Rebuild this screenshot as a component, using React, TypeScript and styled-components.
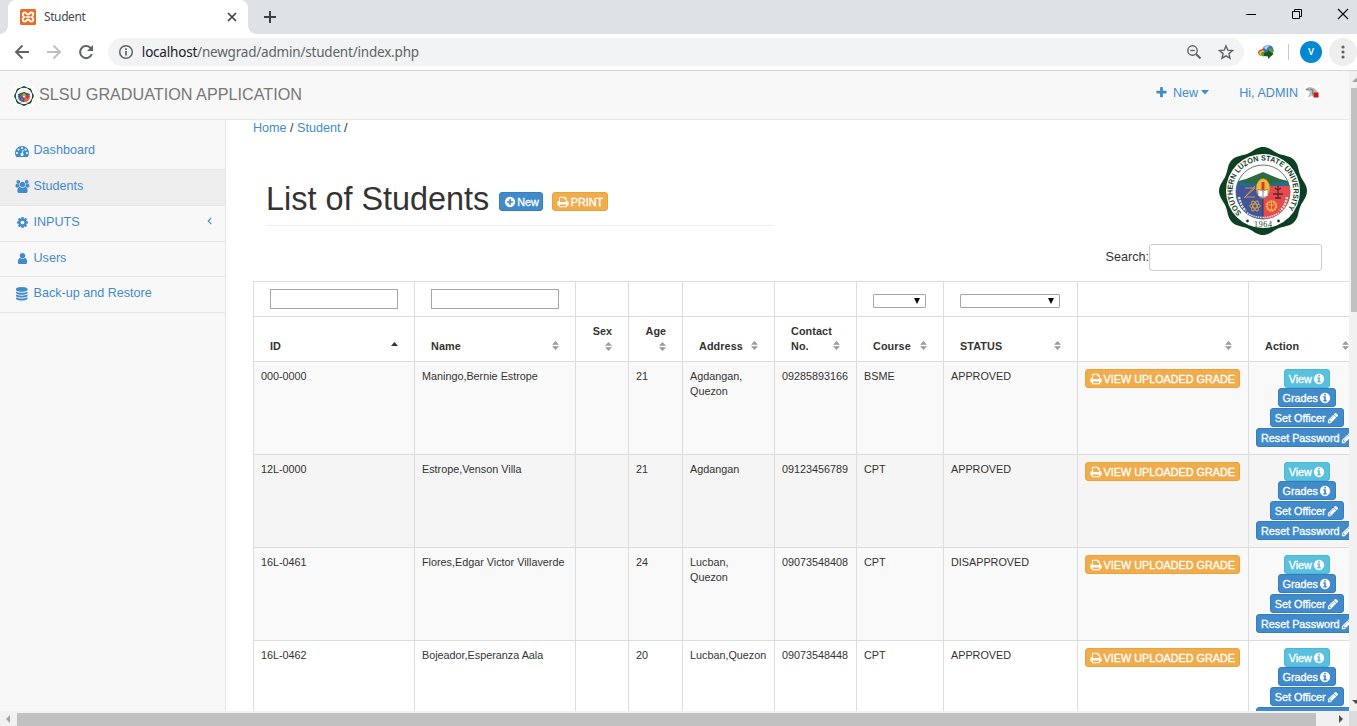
import React from 'react';
import styled, { createGlobalStyle } from 'styled-components';

const Global = createGlobalStyle`
  *, *::before, *::after { box-sizing: border-box; }
  html, body { margin: 0; padding: 0; overflow: hidden; }
  body { font-family: "Liberation Sans", Arial, sans-serif; font-size: 12.6px; line-height: 18px; color: #333; background: #fff; }
`;

/* ---------- icons ---------- */

const disc =
  'q0 209-103 385.5t-279.5 279.5-385.5 103-385.5-103-279.5-279.5-103-385.5 103-385.5 279.5-279.5 385.5-103 385.5 103 279.5 279.5 103 385.5z';

const glyphs = {
  plus: 'M1600 736v192q0 40-28 68t-68 28h-416v416q0 40-28 68t-68 28h-192q-40 0-68-28t-28-68v-416h-416q-40 0-68-28t-28-68v-192q0-40 28-68t68-28h416v-416q0-40 28-68t68-28h192q40 0 68 28t28 68v416h416q40 0 68 28t28 68z',
  plusCircle:
    'M1344 960v-128q0-26-19-45t-45-19h-256v-256q0-26-19-45t-45-19h-128q-26 0-45 19t-19 45v256h-256q-26 0-45 19t-19 45v128q0 26 19 45t45 19h256v256q0 26 19 45t45 19h128q26 0 45-19t19-45v-256h256q26 0 45-19t19-45zm320-64' + disc,
  infoCircle:
    'M1152 1376v-160q0-14-9-23t-23-9h-96v-512q0-14-9-23t-23-9h-320q-14 0-23 9t-9 23v160q0 14 9 23t23 9h96v320h-96q-14 0-23 9t-9 23v160q0 14 9 23t23 9h448q14 0 23-9t9-23zm-128-896v-160q0-14-9-23t-23-9h-192q-14 0-23 9t-9 23v160q0 14 9 23t23 9h192q14 0 23-9t9-23zm640 416' + disc,
  print:
    'M448 1536h896v-256h-896v256zm0-640h896v-384h-160q-40 0-68-28t-28-68v-160h-640v640zm1152 64q0-26-19-45t-45-19-45 19-19 45 19 45 45 19 45-19 19-45zm128 0v416q0 13-9.5 22.5t-22.5 9.5h-224v160q0 40-28 68t-68 28h-960q-40 0-68-28t-28-68v-160h-224q-13 0-22.5-9.5t-9.5-22.5v-416q0-79 56.5-135.5t135.5-56.5h64v-544q0-40 28-68t68-28h672q40 0 88 20t76 48l152 152q28 28 48 76t20 88v256h64q79 0 135.5 56.5t56.5 135.5z',
  pencil:
    'M491 1536l91-91-235-235-91 91v107h128v128h107zm523-928q0-22-22-22-10 0-17 7l-542 542q-7 7-7 17 0 22 22 22 10 0 17-7l542-542q7-7 7-17zm-54-192l416 416-832 832h-416v-416zm683 96q0 53-37 90l-166 166-416-416 166-165q36-38 90-38 53 0 91 38l235 234q37 39 37 91z',
  cog: 'M1152 896q0-106-75-181t-181-75-181 75-75 181 75 181 181 75 181-75 75-181zm512-109v222q0 12-8 23t-20 13l-185 28q-19 54-39 91 35 50 107 138 10 12 10 25t-9 23q-27 37-99 108t-94 71q-12 0-26-9l-138-108q-44 23-91 38-16 136-29 186-7 28-36 28h-222q-14 0-24.5-8.5t-11.5-21.5l-28-184q-49-16-90-37l-141 107q-10 9-25 9-14 0-25-11-126-114-165-168-7-10-7-23 0-12 8-23 15-21 51-66.5t54-70.5q-27-50-41-99l-183-27q-13-2-21-12.5t-8-23.5v-222q0-12 8-23t19-13l186-28q14-46 39-92-40-57-107-138-10-12-10-24 0-10 9-23 26-36 98.5-107.5t94.5-71.5q13 0 26 10l138 107q44-23 91-38 16-136 29-186 7-28 36-28h222q14 0 24.5 8.5t11.5 21.5l28 184q49 16 90 37l142-107q9-9 24-9 13 0 25 10 129 119 165 170 7 8 7 22 0 12-8 23-15 21-51 66.5t-54 70.5q26 50 41 98l183 28q13 2 21 12.5t8 23.5z',
  user: 'M1536 1399q0 109-62.5 187t-150.5 78h-854q-88 0-150.5-78t-62.5-187q0-85 8.5-160.5t31.5-152 58.5-131 94-89 134.5-34.5q131 128 313 128t313-128q76 0 134.5 34.5t94 89 58.5 131 31.5 152 8.5 160.5zm-256-887q0 159-112.5 271.5t-271.5 112.5-271.5-112.5-112.5-271.5 112.5-271.5 271.5-112.5 271.5 112.5 112.5 271.5z',
  database:
    'M896 768q237 0 443-43t325-127v170q0 69-103 128t-280 93.5-385 34.5-385-34.5-280-93.5-103-128v-170q119 84 325 127t443 43zm0 768q237 0 443-43t325-127v170q0 69-103 128t-280 93.5-385 34.5-385-34.5-280-93.5-103-128v-170q119 84 325 127t443 43zm0-384q237 0 443-43t325-127v170q0 69-103 128t-280 93.5-385 34.5-385-34.5-280-93.5-103-128v-170q119 84 325 127t443 43zm0-1152q208 0 385 34.5t280 93.5 103 128v128q0 69-103 128t-280 93.5-385 34.5-385-34.5-280-93.5-103-128v-128q0-69 103-128t280-93.5 385-34.5z',
  users:
    'M529 896q-162 5-265 128h-134q-82 0-138-40.5t-56-118.5q0-353 124-353 6 0 43.5 21t97.5 42.5 119 21.5q67 0 133-23-5 37-5 66 0 139 81 256zm1071 637q0 120-73 189.5t-194 69.5h-874q-121 0-194-69.5t-73-189.5q0-53 3.5-103.5t14-109 26.5-108.5 43-97.5 62-81 85.5-53.5 111.5-20q10 0 43 21.5t73 48 107 48 135 21.5 135-21.5 107-48 73-48 43-21.5q61 0 111.5 20t85.5 53.5 62 81 43 97.5 26.5 108.5 14 109 3.5 103.5zm-1024-1277q0 106-75 181t-181 75-181-75-75-181 75-181 181-75 181 75 75 181zm704 384q0 159-112.5 271.5t-271.5 112.5-271.5-112.5-112.5-271.5 112.5-271.5 271.5-112.5 271.5 112.5 112.5 271.5zm576 225q0 78-56 118.5t-138 40.5h-134q-103-123-265-128 81-117 81-256 0-29-5-66 66 23 133 23 59 0 119-21.5t97.5-42.5 43.5-21q124 0 124 353zm-128-609q0 106-75 181t-181 75-181-75-75-181 75-181 181-75 181 75 75 181z',
  gauge:
    'M384 1152q0-53-37.5-90.5t-90.5-37.5-90.5 37.5-37.5 90.5 37.5 90.5 90.5 37.5 90.5-37.5 37.5-90.5zm192-448q0-53-37.5-90.5t-90.5-37.5-90.5 37.5-37.5 90.5 37.5 90.5 90.5 37.5 90.5-37.5 37.5-90.5zm428 481l101-382q6-26-7.5-48.5t-38.5-29.5-48 6.5-30 39.5l-101 382q-60 5-107 43.5t-63 98.5q-20 77 20 146t117 89 146-20 89-117q16-60-6-117t-72-91zm660-33q0-53-37.5-90.5t-90.5-37.5-90.5 37.5-37.5 90.5 37.5 90.5 90.5 37.5 90.5-37.5 37.5-90.5zm-640-640q0-53-37.5-90.5t-90.5-37.5-90.5 37.5-37.5 90.5 37.5 90.5 90.5 37.5 90.5-37.5 37.5-90.5zm448 192q0-53-37.5-90.5t-90.5-37.5-90.5 37.5-37.5 90.5 37.5 90.5 90.5 37.5 90.5-37.5 37.5-90.5zm320 448q0 261-141 483-19 29-54 29h-1402q-35 0-54-29-141-221-141-483 0-182 71-348t191-286 286-191 348-71 348 71 286 191 191 286 71 348z',
};
type GlyphName = keyof typeof glyphs;

const Svg = styled.svg<{ $s: number }>`
  width: ${p => p.$s}px;
  height: ${p => p.$s}px;
  flex: none;
  display: block;
  overflow: visible;
`;
const Glyph = ({ name, size = 12.6 }: { name: GlyphName; size?: number }) => (
  <Svg $s={size} viewBox="0 0 1792 1792" fill="currentColor">
    <path d={glyphs[name]} />
  </Svg>
);

/* ---------- browser frame ---------- */

const Window = styled.div`
  width: 1357px;
  height: 726px;
  display: flex;
  flex-direction: column;
  overflow: hidden;
`;
const TabStrip = styled.div`
  height: 34px;
  flex: none;
  background: #dee1e6;
  display: flex;
  justify-content: space-between;
  padding-left: 8px;
`;
const TabGroup = styled.div`
  display: flex;
  align-items: center;
`;
const Tab = styled.div`
  position: relative;
  width: 240px;
  height: 34px;
  background: #fff;
  border-radius: 8px 8px 0 0;
  display: flex;
  align-items: center;
  padding: 0 10px 0 12px;
  font: 12px/16px "Noto Sans", "Open Sans", sans-serif;
  color: #45494d;
  &::before, &::after {
    content: '';
    position: absolute;
    bottom: 0;
    width: 8px;
    height: 8px;
  }
  &::before { left: -8px; background: radial-gradient(circle at 0 0, transparent 7.5px, #fff 8px); }
  &::after { right: -8px; background: radial-gradient(circle at 100% 0, transparent 7.5px, #fff 8px); }
`;
const TabTitle = styled.span`
  flex: 1;
  padding-left: 8px;
  letter-spacing: -0.4px;
`;
const NewTab = styled.div`
  padding-left: 15px;
`;
const WinButtons = styled.div`
  display: flex;
  height: 28px;
  align-items: center;
  gap: 34px;
  padding-right: 8px;
`;
const Toolbar = styled.div`
  height: 37px;
  flex: none;
  background: #fff;
  border-bottom: 1px solid #d5d6d8;
  display: flex;
  align-items: center;
  padding-left: 14px;
`;
const NavButtons = styled.div`
  display: flex;
  gap: 16px;
  width: 94px;
`;
const UrlBar = styled.div`
  width: 1138px;
  height: 28px;
  border-radius: 14px;
  background: #f1f3f4;
  display: flex;
  align-items: center;
  padding: 0 10px 0 10px;
  font: 13.5px/20px "Noto Sans", "Open Sans", sans-serif;
  color: #5f6368;
`;
const Url = styled.span`
  flex: 1;
  padding-left: 8px;
  letter-spacing: -0.2px;
  b { font-weight: 400; color: #202124; }
`;
const UrlIcons = styled.div`
  display: flex;
  gap: 16px;
`;
const Extension = styled.div`
  padding-left: 14px;
  width: 44px;
`;
const Divider = styled.div`
  width: 1px;
  height: 16px;
  background: #c8cace;
`;
const Avatar = styled.div`
  width: 22px;
  height: 22px;
  margin-left: 11px;
  border-radius: 50%;
  background: #0288d1;
  color: #fff;
  font: 500 9.5px/22px Roboto, sans-serif;
  text-align: center;
`;
const Kebab = styled.div`
  width: 28px;
  height: 28px;
  margin-left: 7px;
  flex: none;
  border-radius: 50%;
  background: #eeeeee;
  display: flex;
  align-items: center;
  justify-content: center;
`;
const Viewport = styled.div`
  flex: 1;
  min-height: 0;
  display: flex;
`;
const Page = styled.div`
  width: 1349px;
  height: 640px;
  overflow: hidden;
  display: flex;
  flex-direction: column;
`;
const VTrack = styled.div`
  width: 8px;
  background: #f1f1f1;
  display: flex;
  flex-direction: column;
  justify-content: space-between;
  padding: 7px 0 7px 2px;
`;
const VThumb = styled.div`
  height: 224px;
  margin: 6px 0 auto;
  background: #c1c1c1;
`;
const HTrack = styled.div`
  height: 15px;
  flex: none;
  background: #f1f1f1;
  display: flex;
  align-items: center;
  padding-left: 6px;
`;
const HThumb = styled.div`
  width: 1299px;
  height: 13px;
  margin: 2px 23px 0 7px;
  background: #c1c1c1;
`;
const Corner = styled.div`
  width: 8px;
  height: 15px;
  margin-left: auto;
  background: #dcdcdc;
`;

/* ---------- app layout ---------- */

const Navbar = styled.div`
  height: 49px;
  flex: none;
  background: #f8f8f8;
  border-bottom: 1px solid #e7e7e7;
  display: flex;
  justify-content: space-between;
  padding: 0 29px 0 14px;
`;
const Brand = styled.div`
  display: flex;
  align-items: center;
  gap: 5px;
  height: 46px;
  font-size: 16.2px;
  color: #777;
  white-space: nowrap;
`;
const BrandSeal = styled.div`
  width: 20px;
  height: 20px;
  margin-top: 4px;
  background: #fff;
`;
const TopLinks = styled.div`
  display: flex;
  align-items: center;
  height: 43px;
  color: #428bca;
`;
const TopLink = styled.div<{ $ml?: number }>`
  display: flex;
  align-items: center;
  margin-left: ${p => p.$ml ?? 0}px;
`;
const NewText = styled.span`
  padding: 0 3px 0 5px;
`;
const UserPic = styled.div`
  margin: 3px 0 0 6px;
`;
const Body = styled.div`
  flex: 1;
  min-height: 0;
  display: flex;
`;
const Sidebar = styled.div`
  width: 226px;
  flex: none;
  background: #f8f8f8;
  border-right: 1px solid #e7e7e7;
  padding-top: 14px;
`;
const SideItem = styled.div<{ $active?: boolean; $h: number }>`
  height: ${p => p.$h}px;
  border-bottom: 1px solid #e7e7e7;
  background: ${p => (p.$active ? '#eee' : 'transparent')};
  color: #428bca;
  display: flex;
  align-items: flex-start;
  padding: 7px 13px 0 15px;
`;
const SideIcon = styled.span`
  width: 14px;
  height: 18px;
  margin-right: 4.5px;
  padding-top: 3px;
  display: flex;
  justify-content: center;
`;
const SideArrow = styled.span`
  margin: -1px 0 0 auto;
`;
const Main = styled.div`
  flex: 1;
  min-width: 0;
  padding-left: 27px;
`;
const Crumbs = styled.div`
  height: 26px;
  line-height: 17px;
  a { color: #428bca; }
`;
const Hero = styled.div`
  height: 94px;
  display: flex;
  justify-content: space-between;
  padding: 0 41px 0 13px;
`;
const Heading = styled.div`
  width: 508px;
  height: 80px;
  border-bottom: 1px solid #eee;
  display: flex;
  align-items: flex-start;
  padding-top: 33px;
`;
const Title = styled.h1`
  margin: 0 10px 0 0;
  font-weight: 400;
  font-size: 32.4px;
  line-height: 40px;
  white-space: nowrap;
`;
const SearchRow = styled.div`
  display: flex;
  justify-content: flex-end;
  height: 41px;
  padding: 4px 27px 0 0;
  line-height: 26px;
`;
const SearchInput = styled.input`
  width: 173px;
  height: 27px;
  border: 1px solid #ccc;
  border-radius: 3px;
  outline: 0;
  background: #fff;
`;

const tones = {
  primary: ['#428bca', '#357ebd'],
  warning: ['#f0ad4e', '#eea236'],
  info: ['#5bc0de', '#46b8da'],
};
const Button = styled.span<{ $tone: keyof typeof tones; $w: number }>`
  width: ${p => p.$w}px;
  height: 19px;
  flex: none;
  border: 1px solid ${p => tones[p.$tone][1]};
  border-radius: 3px;
  background: ${p => tones[p.$tone][0]};
  color: #fff;
  font-size: 10.8px;
  line-height: 16px;
  padding-top: 1px;
  -webkit-text-stroke: 0.3px #fff;
  display: flex;
  align-items: center;
  justify-content: center;
  gap: 1.5px;
  white-space: nowrap;
  svg { stroke: none; -webkit-text-stroke: 0; }
`;
const HeadButtons = styled.div`
  display: flex;
  gap: 9px;
  padding-top: 13px;
`;

/* ---------- table ---------- */

const Table = styled.div`
  width: 1105px;
  font-size: 10.8px;
  line-height: 15px;
`;
const Row = styled.div<{ $h: number; $bg?: string }>`
  display: grid;
  grid-template-columns: 161px 161px 53px 54px 92px 82px 87px 134px 171px 110px;
  height: ${p => p.$h}px;
  background: ${p => p.$bg ?? '#fff'};
`;
const Cell = styled.div`
  border-top: 1px solid #ddd;
  border-left: 1px solid #ddd;
  padding: 7px 7px 0;
`;
const FilterCell = styled(Cell)`
  padding: 7px 16px 0;
`;
const HeadCell = styled(Cell)`
  display: flex;
  align-items: flex-end;
  justify-content: space-between;
  padding: 0 15px 7px 16px;
  font-weight: 700;
  letter-spacing: 0.1px;
`;
const NarrowHead = styled(Cell)`
  display: flex;
  flex-direction: column;
  align-items: flex-end;
  padding: 7px 16px 0 0;
  font-weight: 700;
`;
const FilterInput = styled.input`
  width: 128px;
  height: 20px;
  display: block;
  border: 1px solid #a6a6a6;
  outline: 0;
  background: #fff;
`;
const FilterSelect = styled.div<{ $w: number }>`
  width: ${p => p.$w}px;
  height: 14px;
  margin-top: 5px;
  border: 1px solid #a6a6a6;
  border-radius: 1px;
  display: flex;
  align-items: center;
  justify-content: flex-end;
  padding-right: 5px;
`;
const Actions = styled.div`
  width: 102px;
  display: flex;
  flex-direction: column;
  align-items: center;
  gap: 1px;
  & > :first-child { margin-bottom: -1px; }
`;

const SortIcon = ({ asc }: { asc?: boolean }) => (
  <Svg $s={9} viewBox="0 0 9 9">
    {asc ? (
      <path d="M4.5 0 8 4H1z" fill="#333" />
    ) : (
      <path d="M4.5 0 8 3.8H1zM1 5.200h7L4.500 9z" fill="#999" />
    )}
  </Svg>
);
const SortWrap = styled.span<{ $up?: boolean; $shift?: number }>`
  padding-bottom: ${p => (p.$up ? 3 : 4)}px;
  margin-right: ${p => p.$shift ?? 0}px;
`;
const NarrowSort = styled.span`
  padding-top: 3px;
  margin-right: -1px;
`;
const DropArrow = () => (
  <svg width="6" height="6" viewBox="0 0 6 6"><path d="M0 0h6L3 6z" fill="#000" /></svg>
);

/* ---------- pictures ---------- */

const scallop = (() => {
  let d = '';
  for (let i = 0; i <= 160; i++) {
    const a = (i / 160) * Math.PI * 2;
    const r = 42.2 + 1.8 * Math.cos(8 * a);
    d += `${i ? 'L' : 'M'}${(45 + r * Math.sin(a)).toFixed(2)} ${(45 - r * Math.cos(a)).toFixed(2)}`;
  }
  return d + 'z';
})();

const Seal = ({ size, id }: { size: number; id: string }) => (
  <Svg $s={size} viewBox="0 0 90 90">
    <defs>
      <path id={`${id}-ring`} d="M24.500 67.500A30.400 30.400 0 1 1 65.500 67.500" />
      <clipPath id={`${id}-clip`}><circle cx="45" cy="46" r="27" /></clipPath>
    </defs>
    <path d={scallop} fill="#0d4023" />
    <circle cx="45" cy="45" r="37" fill="#fff" />
    <circle cx="45" cy="46" r="27" fill="#fff" stroke="#3d594b" strokeWidth=".8" />
    <g clipPath={`url(#${id}-clip)`}>
      <path d="M17 36 28 33 45 26 62 33 74 36V41H17z" fill="#2b6a43" />
      <path d="M17 36.500h10l10 1.500h16l10-2h12v4H17z" fill="#246b94" />
      <path d="M17 40h28v35H17z" fill="#42549a" />
      <path d="M45 40h28v35H45z" fill="#e64a4f" />
      <path d="M45 38v35" stroke="#222d53" strokeWidth=".8" />
      <g stroke="#d9a441" fill="none" strokeWidth=".9">
        <path d="M27 42h10L27 51h10M26 52l11-12" />
        <ellipse cx="37" cy="60" rx="5.500" ry="2" />
        <ellipse cx="37" cy="60" rx="5.500" ry="2" transform="rotate(60 37 60)" />
        <ellipse cx="37" cy="60" rx="5.500" ry="2" transform="rotate(120 37 60)" />
      </g>
      <circle cx="53.500" cy="60" r="4.600" fill="none" stroke="#f2b63c" strokeWidth="2.200" strokeDasharray="2 .5" />
      <path d="M53.500 56v8M51 59h5" stroke="#f2b63c" strokeWidth="1" />
      <path d="M60 40v13M55 48h10M57 52h6M57 42l3 2 3-2" stroke="#5a2626" strokeWidth="1.300" fill="none" />
      <path d="M21 51q2 10 7 14M69 51q-2 10-7 14" stroke="#d5dfd0" strokeWidth="2.500" strokeDasharray="2 1" fill="none" />
      <path d="M29 67q16 9 32 0" stroke="#dfe2f2" strokeWidth="1.500" strokeDasharray="1.500 .8" fill="none" />
    </g>
    <ellipse cx="45" cy="42.500" rx="7" ry="10" fill="#efbb35" stroke="#a06a20" strokeWidth=".5" />
    <path d="M43.500 36h3v8h-3z" fill="#d63c31" />
    <path d="M40 43.500 45 45l5-1.500V50L45 51.500 40 50z" fill="#fff" stroke="#465089" strokeWidth=".5" />
    <path d="M45 45v6" stroke="#465089" strokeWidth=".7" />
    <circle cx="29.500" cy="75" r="1.400" fill="#173d26" />
    <circle cx="60.500" cy="75" r="1.400" fill="#173d26" />
    {size > 40 && (
      <g fill="#153c26" fontWeight="700">
        <text fontSize="7.600" fontFamily='"Liberation Sans", sans-serif'>
          <textPath href={`#${id}-ring`} textLength="138" lengthAdjust="spacingAndGlyphs" startOffset="1">SOUTHERN LUZON STATE UNIVERSITY</textPath>
        </text>
        <text x="45" y="81" fontSize="8" textAnchor="middle" fontFamily='"Liberation Serif", serif' fontWeight="400" textLength="18">1964</text>
      </g>
    )}
  </Svg>
);

const Favicon = () => (
  <Svg $s={16} viewBox="0 0 16 16">
    <rect width="16" height="16" rx="1.500" fill="#ec6b1f" />
    <path d="M4.700 3.500c2 0 1.800 2 3.300 2s1.300-2 3.300-2c1.300 0 2 .9 2 2.200 0 1.600-1.500 1.500-1.500 2.300s1.500.8 1.500 2.300c0 1.300-.7 2.200-2 2.200-2 0-1.800-2-3.300-2s-1.300 2-3.300 2c-1.300 0-2-.9-2-2.200C2.700 8.800 4.200 8.800 4.200 8S2.700 7.300 2.700 5.700c0-1.300.7-2.200 2-2.200z" fill="none" stroke="#fff" strokeWidth="1.800" />
    <path d="M5.500 8h5" stroke="#fff" strokeWidth="1.500" />
  </Svg>
);

const GlobeExtension = () => (
  <Svg $s={16} viewBox="0 0 16 16">
    <circle cx="10" cy="6.500" r="5.600" fill="#3470c4" />
    <path d="M6 3.500Q9 0 12 2 9 3 9 5.500 7 6 6 3.500z" fill="#b4d6f3" />
    <path d="M11 4q3 0 4.500 3-.5 3-3 4-2-3-1.500-7z" fill="#59a534" />
    <path d="M0 8Q2 4.500 5.500 5L6 9l-3 3Q0 11 0 8z" fill="#e0402e" />
    <path d="M1.500 8.500Q3 6 5.500 6.500L8 11l-4 1Q1 11 1.500 8.500z" fill="#f3d52e" />
    <path d="M3 9q2-2 4-.500L9 11.500 5 12.500Q2.500 11 3 9z" fill="#3ca43a" />
    <path d="M6 9l4-1.500V6l5.500 4L10 15v-2.500L6 12z" fill="#20521f" />
  </Svg>
);

/* ---------- data ---------- */

const students = [
  { id: '000-0000', name: 'Maningo,Bernie Estrope', age: 21, address: 'Agdangan, Quezon', contact: '09285893166', course: 'BSME', status: 'APPROVED', bg: '#f9f9f9' },
  { id: '12L-0000', name: 'Estrope,Venson Villa', age: 21, address: 'Agdangan', contact: '09123456789', course: 'CPT', status: 'APPROVED', bg: '#f5f5f5' },
  { id: '16L-0461', name: 'Flores,Edgar Victor Villaverde', age: 24, address: 'Lucban, Quezon', contact: '09073548408', course: 'CPT', status: 'DISAPPROVED', bg: '#f9f9f9' },
  { id: '16L-0462', name: 'Bojeador,Esperanza Aala', age: 20, address: 'Lucban,Quezon', contact: '09073548448', course: 'CPT', status: 'APPROVED', bg: '#fff' },
];

const menu: { label: string; icon: GlyphName; h: number; size?: number; active?: boolean; arrow?: boolean }[] = [
  { label: 'Dashboard', icon: 'gauge', h: 36, size: 14 },
  { label: 'Students', icon: 'users', h: 36, size: 13, active: true },
  { label: 'INPUTS', icon: 'cog', h: 36, size: 13, arrow: true },
  { label: 'Users', icon: 'user', h: 35, size: 13 },
  { label: 'Back-up and Restore', icon: 'database', h: 36, size: 13.5 },
];

const Head = ({ label, asc, shift }: { label: React.ReactNode; asc?: boolean; shift?: number }) => (
  <HeadCell>
    <span>{label}</span>
    <SortWrap $up={asc} $shift={shift}><SortIcon asc={asc} /></SortWrap>
  </HeadCell>
);

export default function App() {
  return (
    <Window>
      <Global />
      <TabStrip>
        <TabGroup>
          <Tab>
            <Favicon />
            <TabTitle>Student</TabTitle>
            <svg width="12" height="12" viewBox="0 0 12 12"><path d="M2 2l8 8M10 2l-8 8" stroke="#3c4043" strokeWidth="1.700" /></svg>
          </Tab>
          <NewTab>
            <Svg $s={14} viewBox="0 0 14 14"><path d="M7 1v12M1 7h12" stroke="#3c4043" strokeWidth="2" /></Svg>
          </NewTab>
        </TabGroup>
        <WinButtons>
          <svg width="12" height="12"><path d="M1 6.500h10" stroke="#000" /></svg>
          <svg width="12" height="12" fill="none" stroke="#000"><path d="M1.500 3.500h7v7h-7zM3.500 3.500v-2h7v7h-2" /></svg>
          <svg width="12" height="12"><path d="M1 1l10 10M11 1L1 11" stroke="#000" strokeWidth="1.100" /></svg>
        </WinButtons>
      </TabStrip>
      <Toolbar>
        <NavButtons>
          <Svg $s={16} viewBox="0 0 16 16" fill="none" stroke="#5f6368" strokeWidth="1.900"><path d="M15 8H2.500M8.500 1.500 2 8l6.500 6.500" /></Svg>
          <Svg $s={16} viewBox="0 0 16 16" fill="none" stroke="#bdc0c3" strokeWidth="1.900"><path d="M1 8h12.500M7.500 1.500 14 8l-6.500 6.500" /></Svg>
          <Svg $s={16} viewBox="0 0 16 16" fill="none" stroke="#5f6368" strokeWidth="2"><path d="M13.800 10A6 6 0 1 1 12.300 3.800L14 5.500" /><path d="M15 1v6H9z" fill="#5f6368" stroke="none" /></Svg>
        </NavButtons>
        <UrlBar>
          <Svg $s={16} viewBox="0 0 16 16" fill="none" stroke="#5f6368" strokeWidth="1.500"><circle cx="8" cy="8" r="6.300" /><path d="M8 7v4.500M8 4.300v1.600" strokeWidth="1.700" /></Svg>
          <Url><b>localhost</b>/newgrad/admin/student/index.php</Url>
          <UrlIcons>
            <Svg $s={16} viewBox="0 0 16 16" fill="none" stroke="#5f6368" strokeWidth="1.400"><circle cx="6.500" cy="6.500" r="4.700" /><path d="M10 10l4.500 4.500" strokeWidth="1.900" /><path d="M4.300 6.500h4.400" /></Svg>
            <Svg $s={16} viewBox="0 0 16 16" fill="none" stroke="#5f6368" strokeWidth="1.400"><path d="M8 1.900l1.800 4.300 4.700.4-3.600 3 1.100 4.600L8 11.800l-4 2.400 1.100-4.600-3.600-3 4.700-.4z" /></Svg>
          </UrlIcons>
        </UrlBar>
        <Extension><GlobeExtension /></Extension>
        <Divider />
        <Avatar>V</Avatar>
        <Kebab>
          <svg width="4" height="14"><g fill="#5f6368"><circle cx="2" cy="2" r="1.600" /><circle cx="2" cy="7" r="1.600" /><circle cx="2" cy="12" r="1.600" /></g></svg>
        </Kebab>
      </Toolbar>

      <Viewport>
        <Page>
          <Navbar>
            <Brand>
              <BrandSeal><Seal size={20} id="brand" /></BrandSeal>
              SLSU GRADUATION APPLICATION
            </Brand>
            <TopLinks>
              <TopLink>
                <Glyph name="plus" size={13} />
                <NewText>New</NewText>
                <svg width="8" height="5"><path d="M0 0h8L4 4.500z" fill="#428bca" /></svg>
              </TopLink>
              <TopLink $ml={30}>
                Hi, ADMIN
                <UserPic>
                  <svg width="16" height="14" viewBox="0 0 16 14">
                    <rect width="16" height="14" fill="#fff" />
                    <path d="M1 4l4-2 5 1 4 4v5h-3L8 8l-2 4H4l2-5z" fill="#b9b9b7" />
                    <path d="M6 4l3 1-1 6M2 5l3-1" stroke="#777" fill="none" />
                    <rect x="9.500" y="7.500" width="5" height="5" fill="#c4161c" />
                  </svg>
                </UserPic>
              </TopLink>
            </TopLinks>
          </Navbar>
          <Body>
            <Sidebar>
              {menu.map(m => (
                <SideItem key={m.label} $h={m.h} $active={m.active}>
                  <SideIcon><Glyph name={m.icon} size={m.size} /></SideIcon>
                  {m.label}
                  {m.arrow && (
                    <SideArrow>
                      <svg width="5" height="8" viewBox="0 0 5 8"><path d="M4.300.8 1.200 4l3.100 3.200" fill="none" stroke="#428bca" strokeWidth="1.100" /></svg>
                    </SideArrow>
                  )}
                </SideItem>
              ))}
            </Sidebar>
            <Main>
              <Crumbs><a>Home</a> / <a>Student</a> /</Crumbs>
              <Hero>
                <Heading>
                  <Title>List of Students</Title>
                  <HeadButtons>
                    <Button $tone="primary" $w={44}><Glyph name="plusCircle" size={12} />New</Button>
                    <Button $tone="warning" $w={56}><Glyph name="print" size={12} />PRINT</Button>
                  </HeadButtons>
                </Heading>
                <Seal size={90} id="seal" />
              </Hero>
              <SearchRow>Search:<SearchInput /></SearchRow>
              <Table>
                <Row $h={35}>
                  <FilterCell><FilterInput /></FilterCell>
                  <FilterCell><FilterInput /></FilterCell>
                  <Cell /><Cell /><Cell /><Cell />
                  <FilterCell><FilterSelect $w={53}><DropArrow /></FilterSelect></FilterCell>
                  <FilterCell><FilterSelect $w={100}><DropArrow /></FilterSelect></FilterCell>
                  <Cell /><Cell />
                </Row>
                <Row $h={45}>
                  <Head label="ID" asc />
                  <Head label="Name" />
                  <NarrowHead>Sex<NarrowSort><SortIcon /></NarrowSort></NarrowHead>
                  <NarrowHead>Age<NarrowSort><SortIcon /></NarrowSort></NarrowHead>
                  <Head label="Address" />
                  <Head label={<>Contact<br />No.</>} />
                  <Head label="Course" />
                  <Head label="STATUS" />
                  <Head label="" />
                  <Head label="Action" shift={-7} />
                </Row>
                {students.map(s => (
                  <Row key={s.id} $h={93} $bg={s.bg}>
                    <Cell>{s.id}</Cell>
                    <Cell>{s.name}</Cell>
                    <Cell />
                    <Cell>{s.age}</Cell>
                    <Cell>{s.address}</Cell>
                    <Cell>{s.contact}</Cell>
                    <Cell>{s.course}</Cell>
                    <Cell>{s.status}</Cell>
                    <Cell><Button $tone="warning" $w={155}><Glyph name="print" size={12} />VIEW UPLOADED GRADE</Button></Cell>
                    <Cell>
                      <Actions>
                        <Button $tone="info" $w={46}>View<Glyph name="infoCircle" size={12} /></Button>
                        <Button $tone="primary" $w={58}>Grades<Glyph name="infoCircle" size={12} /></Button>
                        <Button $tone="primary" $w={74}>Set Officer<Glyph name="pencil" size={12} /></Button>
                        <Button $tone="primary" $w={102}>Reset Password<Glyph name="pencil" size={12} /></Button>
                      </Actions>
                    </Cell>
                  </Row>
                ))}
              </Table>
            </Main>
          </Body>
        </Page>
        <VTrack>
          <svg width="6" height="4"><path d="M1 4l4-4 4 4z" fill="#a3a3a3" /></svg>
          <VThumb />
          <svg width="6" height="4"><path d="M1 0h8L5 4z" fill="#505050" /></svg>
        </VTrack>
      </Viewport>
      <HTrack>
        <svg width="4" height="8"><path d="M4 0v8L0 4z" fill="#a3a3a3" /></svg>
        <HThumb />
        <svg width="4" height="8"><path d="M0 0v8l4-4z" fill="#505050" /></svg>
        <Corner />
      </HTrack>
    </Window>
  );
}
